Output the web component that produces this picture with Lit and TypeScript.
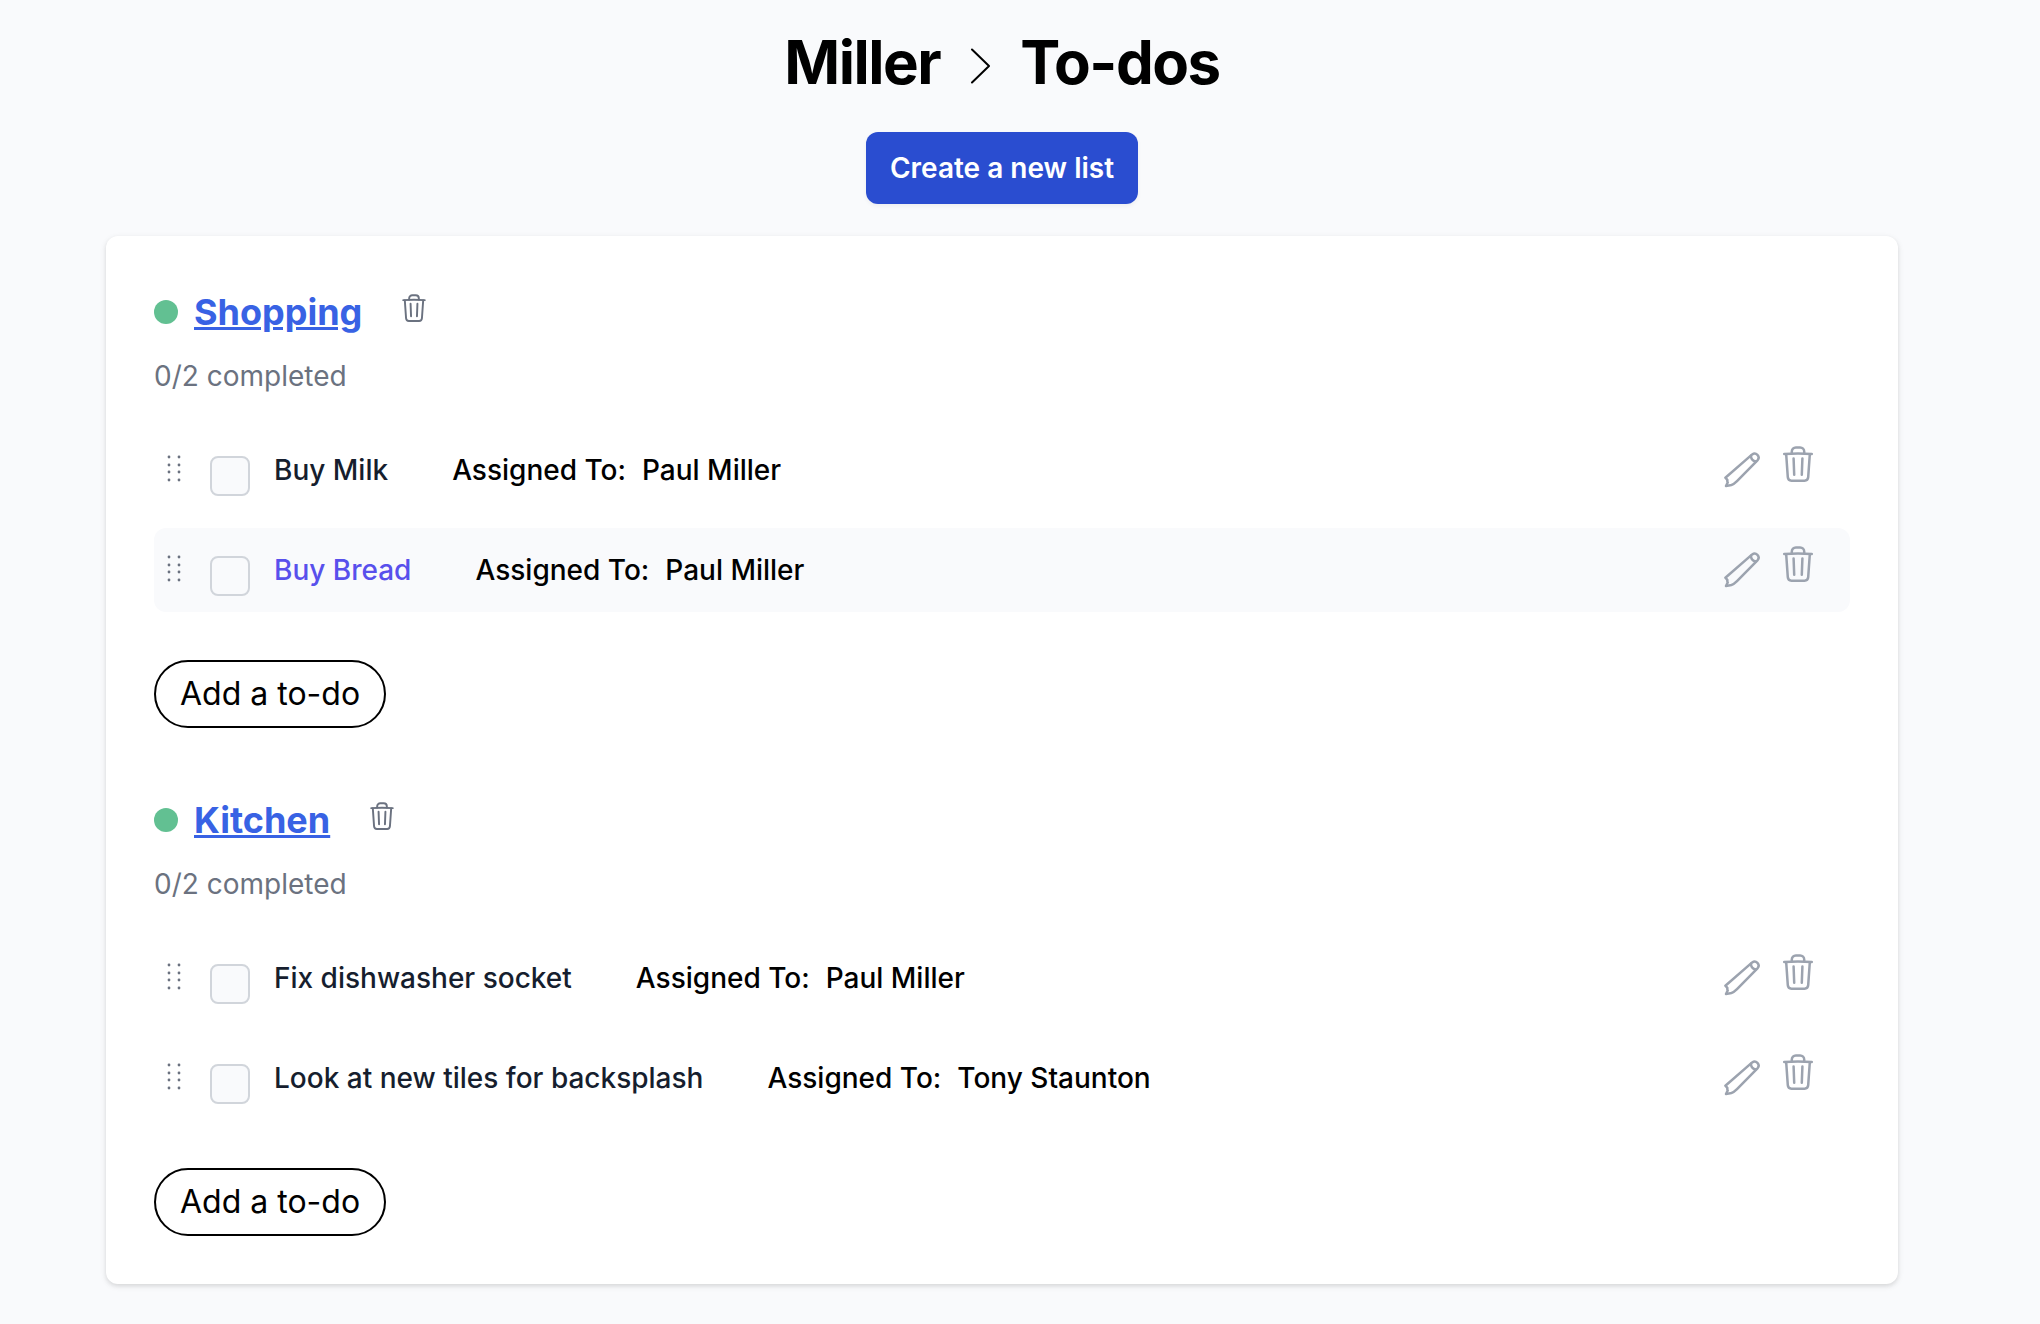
import { LitElement, html, css, svg } from "lit";
import { customElement, property } from "lit/decorators.js";
import { classMap } from "lit/directives/class-map.js";

interface Todo {
  id: string;
  title: string;
  assignee: string;
  active?: boolean;
}

interface TodoList {
  id: string;
  name: string;
  todos: Todo[];
}

const LISTS: TodoList[] = [
  {
    id: "shopping",
    name: "Shopping",
    todos: [
      { id: "milk", title: "Buy Milk", assignee: "Paul Miller" },
      { id: "bread", title: "Buy Bread", assignee: "Paul Miller", active: true },
    ],
  },
  {
    id: "kitchen",
    name: "Kitchen",
    todos: [
      { id: "socket", title: "Fix dishwasher socket", assignee: "Paul Miller" },
      { id: "tiles", title: "Look at new tiles for backsplash", assignee: "Tony Staunton" },
    ],
  },
];

const trashPaths = svg`
  <path d="M1.2 7.9Q15 7.1 28.8 7.9" />
  <path d="M8.8 7V5.5a4 4 0 0 1 4-4h4.4a4 4 0 0 1 4 4V7" />
  <path d="M3.2 8.3L4.8 31.2Q5.1 34.7 8.4 34.7H21.6Q24.9 34.7 25.2 31.2L26.8 8.3" />
  <path d="M10.6 12.5L11.2 28.7M19.4 12.5L18.8 28.7" />
`;

const trashIcon = html`<svg class="trash" viewBox="0 0 30 36" aria-hidden="true">${trashPaths}</svg>`;

const pencilIcon = html`<svg class="pencil" viewBox="0 0 36 36" aria-hidden="true">
  <path d="M1.4 25.7L28.2 2.4A4 4 0 0 1 33.7 8.1L13 29.2Q9.8 32.4 7.4 33L2 34.1L3.7 30.4Q3.1 29.4 3.4 28Q2.6 27 1.4 25.7Z" />
  <path d="M27 3.8Q26.8 8.6 32 9.6" />
</svg>`;

const gripIcon = html`<svg class="grip" viewBox="0 0 14 28" aria-hidden="true">
  ${[3, 11, 18, 26].map((y) => svg`<circle cx="2" cy=${y} r="1.4" /><circle cx="12" cy=${y} r="1.4" />`)}
</svg>`;

@customElement("todo-row")
export class TodoRow extends LitElement {
  @property({ attribute: false }) todo!: Todo;

  static styles = css`
    :host {
      display: block;
    }
    .row {
      display: flex;
      align-items: flex-start;
      min-height: 84px;
      box-sizing: border-box;
      padding: 18px 37px 0 13px;
      border-radius: 12px;
    }
    .row.active {
      background: #f9fafc;
    }
    .grip {
      display: block;
      width: 14px;
      height: 28px;
      margin: 8px 29px 0 0;
      fill: #6b7280;
    }
    .box {
      appearance: none;
      flex: none;
      width: 40px;
      height: 40px;
      margin: 10px 24px 0 0;
      box-sizing: border-box;
      border: 2px solid #d1d5db;
      border-radius: 8px;
      background: #f9fafc;
    }
    .title,
    .assigned {
      font-size: 28px;
      line-height: 48px;
      font-weight: 500;
      white-space: pre;
    }
    .title {
      margin-right: 64px;
      color: #161e2e;
    }
    .active .title {
      color: #5850ec;
    }
    .assigned {
      display: flex;
      gap: 16px;
      color: #000;
    }
    .actions {
      display: flex;
      align-items: flex-start;
      gap: 23px;
      margin-left: auto;
    }
    .icon {
      display: block;
      padding: 0;
      border: 0;
      background: none;
      color: #9ca3af;
    }
    .icon svg {
      display: block;
      fill: none;
      stroke: currentColor;
      stroke-width: 2.5;
      stroke-linecap: round;
      stroke-linejoin: round;
    }
    .trash {
      width: 30px;
      height: 36px;
    }
    .pencil {
      width: 36px;
      height: 36px;
      margin-top: 6px;
    }
  `;

  render() {
    const t = this.todo;
    return html`<div class=${classMap({ row: true, active: !!t.active })}>
      ${gripIcon}
      <input class="box" type="checkbox" id=${t.id} />
      <label class="title" for=${t.id}>${t.title}</label>
      <div class="assigned"><span>Assigned To:</span><span>${t.assignee}</span></div>
      <div class="actions">
        <button class="icon" type="button" aria-label="Edit">${pencilIcon}</button>
        <button class="icon" type="button" aria-label="Delete">${trashIcon}</button>
      </div>
    </div>`;
  }
}

@customElement("app-root")
export class AppRoot extends LitElement {
  static styles = css`
    :host {
      display: block;
      min-height: 100vh;
      box-sizing: border-box;
      padding: 32px 36px 40px 0;
      background: #f9fafc;
      color: #000;
      font-family: Inter, "Liberation Sans", sans-serif;
    }
    .header {
      display: flex;
      flex-direction: column;
      align-items: center;
      gap: 40px;
      margin-bottom: 32px;
    }
    .heading {
      display: flex;
      align-items: center;
      gap: 30px;
      margin: 0;
      font-size: 60px;
      line-height: 60px;
      font-weight: 700;
      letter-spacing: -0.025em;
    }
    .chevron {
      display: block;
      width: 20px;
      height: 36px;
      margin-top: 8px;
      fill: none;
      stroke: currentColor;
      stroke-width: 2;
      stroke-linecap: round;
      stroke-linejoin: round;
    }
    .create {
      padding: 16px 24px;
      border: 0;
      border-radius: 12px;
      background: #2a4dd0;
      color: #fff;
      font: 600 28px/40px Inter, "Liberation Sans", sans-serif;
      box-shadow: 0 2px 4px rgba(0, 0, 0, 0.05);
    }
    .card {
      display: flex;
      flex-direction: column;
      gap: 64px;
      max-width: 1792px;
      margin: 0 auto;
      box-sizing: border-box;
      padding: 48px;
      border-radius: 12px;
      background: #fff;
      box-shadow: 0 2px 6px rgba(0, 0, 0, 0.1), 0 2px 4px rgba(0, 0, 0, 0.06);
    }
    .list-head {
      display: flex;
      align-items: center;
      height: 56px;
    }
    .dot {
      width: 24px;
      height: 24px;
      margin-right: 16px;
      border-radius: 50%;
      background: #62c092;
    }
    .name {
      margin: 0 40px 0 0;
      font-size: 36px;
      line-height: 56px;
      font-weight: 700;
    }
    .link {
      color: #3862e4;
      text-decoration: underline;
    }
    .remove {
      display: block;
      margin-bottom: 8px;
      padding: 0;
      border: 0;
      background: none;
      color: #6b7280;
    }
    .trash {
      display: block;
      width: 24px;
      height: 28px;
      fill: none;
      stroke: currentColor;
      stroke-width: 2.5;
      stroke-linecap: round;
      stroke-linejoin: round;
    }
    .progress {
      margin: 16px 0 32px;
      font-size: 28px;
      line-height: 40px;
      color: #6b7280;
    }
    .rows {
      display: flex;
      flex-direction: column;
      gap: 16px;
      margin-bottom: 48px;
    }
    .add {
      display: block;
      padding: 8px 24px;
      border: 2px solid #000;
      border-radius: 34px;
      background: #fff;
      color: #000;
      font: 400 32px/48px Inter, "Liberation Sans", sans-serif;
    }
  `;

  render() {
    return html`
      <header class="header">
        <h1 class="heading">
          <span>Miller</span>
          <svg class="chevron" viewBox="0 0 20 36" aria-hidden="true"><path d="M2 1.5L19 18L2 34.5" /></svg>
          <span>To-dos</span>
        </h1>
        <button class="create" type="button">Create a new list</button>
      </header>
      <main class="card">
        ${LISTS.map(
          (list) => html`<section>
            <div class="list-head">
              <span class="dot"></span>
              <h2 class="name"><a class="link" href="#${list.id}">${list.name}</a></h2>
              <button class="remove" type="button" aria-label="Delete list">${trashIcon}</button>
            </div>
            <p class="progress">0/${list.todos.length} completed</p>
            <div class="rows">${list.todos.map((todo) => html`<todo-row .todo=${todo}></todo-row>`)}</div>
            <button class="add" type="button">Add a to-do</button>
          </section>`
        )}
      </main>
    `;
  }
}
